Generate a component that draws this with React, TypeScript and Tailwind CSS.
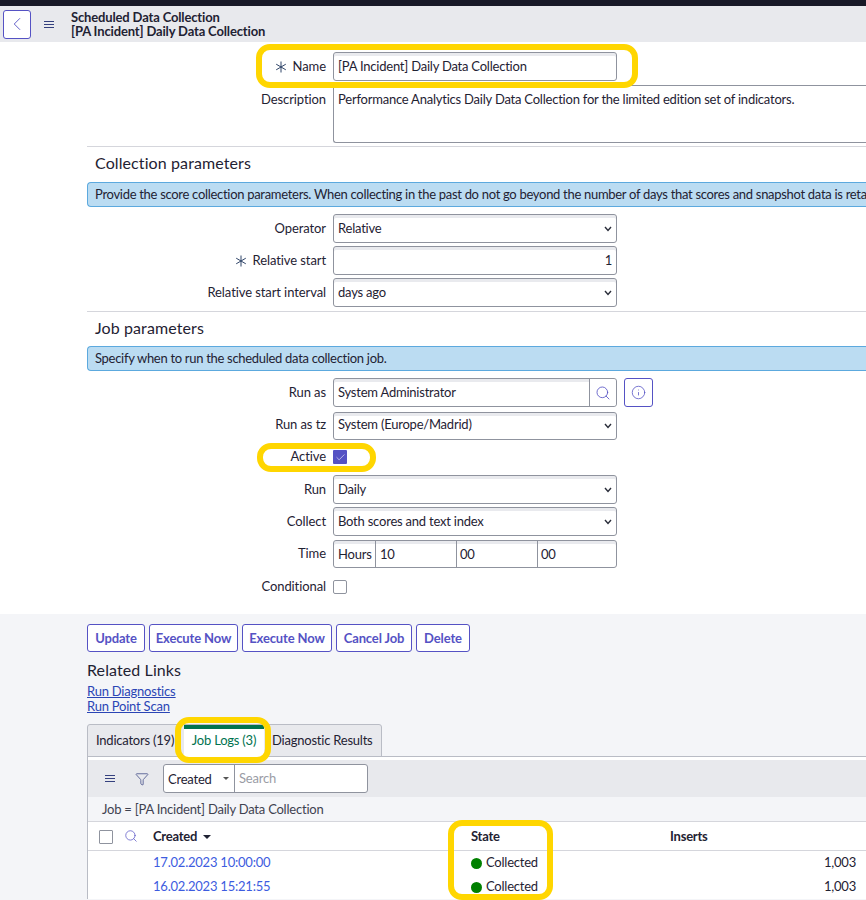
import React from "react";
import { Search, Info, Filter, Check, ChevronLeft } from "lucide-react";

const fieldClass =
  "h-full w-full rounded-[3px] border border-[#8f939e] bg-white px-1 text-[13px] text-[#1f2233] shadow-[inset_0_3px_0_#e9eaee] outline-none";

const Star = () => (
  <svg width="12" height="12" viewBox="0 0 12 12" className="mr-[6px] shrink-0" stroke="#2f4468" strokeWidth="1" fill="none">
    <path d="M6 0.5V11.5M1.2 3.2L10.8 8.8M1.2 8.8L10.8 3.2" />
  </svg>
);

const Bars = () => (
  <svg width="10" height="7" viewBox="0 0 10 7" className="shrink-0" stroke="#34407e" strokeWidth="1" fill="none">
    <path d="M0 0.5H10M0 3.5H10M0 6.5H10" />
  </svg>
);

const Row = ({ label, required, top, children }: { label: string; required?: boolean; top?: string; children: React.ReactNode }) => (
  <div className={`flex ${top ?? ""}`}>
    <div className="flex w-[326px] items-center justify-end text-[13px] tracking-[-0.09px] text-[#1f2233]">
      {required && <Star />}
      <span>{label}</span>
    </div>
    <div className="ml-[7px] w-[284px] tracking-[-0.22px]">{children}</div>
  </div>
);

const Sel = ({ value, short }: { value: string; short?: boolean }) => (
  <div className="relative h-full">
    <select defaultValue={value} className={`${fieldClass} appearance-none ${short ? "pb-[2px]" : ""}`}>
      <option>{value}</option>
    </select>
    <svg width="8" height="6" viewBox="0 0 8 6" className="pointer-events-none absolute right-[5px] top-[12px]" stroke="#2a2d3a" strokeWidth="1.4" fill="none">
      <path d="M1 1L4 4.5L7 1" />
    </svg>
  </div>
);

const SectionHead = ({ text, note, gap }: { text: string; note: string; gap: string }) => (
  <div className="ml-[87px]">
    <h2 className="pl-[8px] text-[16px] leading-[20px] tracking-[0.1px] text-[#1f2233]">{text}</h2>
    <div className={`${gap} h-[25px] w-[800px] overflow-hidden whitespace-nowrap rounded-l-[4px] border border-r-0 border-[#5ca9de] bg-[#bbdcf2] pl-[7px] text-[13px] leading-[22px] tracking-[-0.3px] text-[#1f2233]`}>
      {note}
    </div>
  </div>
);

const actions = [
  { label: "Update", w: "w-[58px]" },
  { label: "Execute Now", w: "w-[89px]" },
  { label: "Execute Now", w: "w-[90px]" },
  { label: "Cancel Job", w: "w-[76px]" },
  { label: "Delete", w: "w-[54px]" },
];

const App: React.FC = () => {
  return (
    <div className="relative h-[900px] w-[866px] overflow-hidden bg-white font-['Lato',sans-serif] tracking-[-0.22px] text-[#1f2233]">
      <div className="h-[6px] bg-[#181927]"></div>
      <header className="flex h-[36px] items-center bg-[#e8e9ed]">
        <button className="ml-[3px] flex h-[29px] w-[28px] items-center justify-center rounded-[3px] border border-[#5552c4] bg-white text-[#5552c4]">
          <ChevronLeft size={22} strokeWidth={1} />
        </button>
        <span className="ml-[13px]"><Bars /></span>
        <div className="ml-[17px] text-[13px] font-bold leading-[14px] tracking-[-0.15px] text-[#1f2233]">
          <div>Scheduled Data Collection</div>
          <div>[PA Incident] Daily Data Collection</div>
        </div>
      </header>

      <form className="h-[572px] pt-[10px]">
        <Row label="Name" required>
          <div className="h-[29px]">
            <input readOnly value="[PA Incident] Daily Data Collection" className={fieldClass + " pb-[2px]"} />
          </div>
        </Row>
        <div className="mt-[4px] flex">
          <div className="w-[326px] shrink-0 pt-[5px] text-right text-[13px] tracking-[-0.09px]">Description</div>
          <div className="ml-[7px] h-[58px] w-[560px] shrink-0 rounded-l-[3px] border border-r-0 border-[#8f939e] pl-[4px] pt-[4px] text-[13px] leading-[18px]">
            Performance Analytics Daily Data Collection for the limited edition set of indicators.
          </div>
        </div>
        <div className="ml-[87px] mt-[3px] h-px bg-[#d5d6dc]"></div>
        <div className="mt-[6px]">
          <SectionHead
            gap="mt-[9px]"
            text="Collection parameters"
            note="Provide the score collection parameters. When collecting in the past do not go beyond the number of days that scores and snapshot data is retained."
          />
        </div>
        <div className="mt-[7px] flex flex-col gap-[3px]">
          <Row label="Operator"><div className="h-[29px]"><Sel value="Relative" /></div></Row>
          <Row label="Relative start" required>
            <div className="h-[29px]"><input readOnly value="1" className={fieldClass + " pb-[1px] text-right"} /></div>
          </Row>
          <Row label="Relative start interval"><div className="h-[29px]"><Sel value="days ago" /></div></Row>
        </div>
        <div className="ml-[87px] mt-[4px] h-px bg-[#d5d6dc]"></div>
        <div className="mt-[6px]">
          <SectionHead gap="mt-[8px]" text="Job parameters" note="Specify when to run the scheduled data collection job." />
        </div>
        <div className="mt-[7px] flex flex-col">
          <div className="relative">
            <Row label="Run as">
              <div className="flex h-[29px] rounded-[3px] border border-[#8f939e] bg-white shadow-[inset_0_3px_0_#e9eaee]">
                <div className="flex-1 px-1 text-[13px] leading-[27px]">System Administrator</div>
                <div className="flex w-[27px] items-center justify-center rounded-r-[3px] border-l border-[#8f939e] bg-white text-[#5552c4]">
                  <Search size={16} strokeWidth={1.25} />
                </div>
              </div>
            </Row>
            <button type="button" className="absolute left-[624px] top-0 flex h-[29px] w-[29px] items-center justify-center rounded-[3px] border border-[#5552c4] bg-white text-[#5552c4]">
              <Info size={15} strokeWidth={1.25} />
            </button>
          </div>
          <Row label="Run as tz" top="mt-[4px]"><div className="h-[28px]"><Sel value="System (Europe/Madrid)" short /></div></Row>
          <Row label="Active" top="mt-[4px] mb-[4px] h-[28px]">
            <div className="flex h-full items-center">
              <span className="flex h-[14px] w-[14px] items-center justify-center rounded-[1px] bg-[#5552c4] text-white">
                <Check size={11} strokeWidth={1.25} />
              </span>
            </div>
          </Row>
          <Row label="Run"><div className="h-[29px]"><Sel value="Daily" /></div></Row>
          <Row label="Collect" top="mt-[3px]"><div className="h-[29px]"><Sel value="Both scores and text index" /></div></Row>
          <Row label="Time" top="mt-[4px]">
            <div className="flex h-[28px] rounded-[3px] border border-[#8f939e] bg-white text-[13px] leading-[27px] shadow-[inset_0_3px_0_#e9eaee]">
              <div className="w-[42px] border-r border-[#8f939e] pl-[4px]">Hours</div>
              <div className="w-[81px] border-r border-[#8f939e] pl-[4px]">10</div>
              <div className="w-[81px] border-r border-[#8f939e] pl-[3px]">00</div>
              <div className="flex-1 pl-[3px]">00</div>
            </div>
          </Row>
          <Row label="Conditional" top="mt-[4px] h-[30px]">
            <div className="flex h-full items-center">
              <span className="h-[14px] w-[14px] rounded-[2px] border border-[#8f939e] bg-white"></span>
            </div>
          </Row>
        </div>
      </form>

      <section className="h-[286px] bg-[#f4f5f8] pl-[87px] pt-[10px]">
        <div className="flex gap-[4px]">
          {actions.map((a, i) => (
            <button key={i} className={`${a.w} h-[28px] whitespace-nowrap rounded-[3px] border border-[#5552c4] bg-white pt-[1px] text-[13px] font-bold tracking-[-0.12px] text-[#5552c4]`}>
              {a.label}
            </button>
          ))}
        </div>
        <div className="mt-[8px] text-[16px] leading-[20px] tracking-[0.1px]">Related Links</div>
        <div className="mt-[4px] flex flex-col text-[13px] leading-[15px] text-[#2b45b5] underline">
          <a href="#">Run Diagnostics</a>
          <a href="#">Run Point Scan</a>
        </div>

        <div className="mt-[10px] flex h-[33px] w-[295px] rounded-t-[3px] border border-[#b9bcc5] bg-[#e8e9ed] text-[13px]">
          <div className="w-[96px] whitespace-nowrap pl-[8px] pt-[6px]">Indicators (19)</div>
          <div className="h-[32px] w-[80px] whitespace-nowrap border-t-4 border-[#00734f] bg-white pt-[2px] text-center text-[#00734f]">Job Logs (3)</div>
          <div className="whitespace-nowrap pl-[8px] pt-[6px]">Diagnostic Results</div>
        </div>
        <div className="border-l border-[#b9bcc5] bg-white">
          <div className="mt-[-1px] h-[4px] border-t border-[#b9bcc5]"></div>
          <div className="flex h-[37px] items-center bg-[#e8e9ed] pl-[17px]">
            <Bars />
            <Filter size={14} strokeWidth={1.25} className="ml-[20px] text-[#34407e]" />
            <div className="ml-[14px] flex h-[29px] w-[205px] rounded-[3px] border border-[#8f939e] bg-white text-[13px] leading-[26px]">
              <div className="flex w-[71px] items-center justify-between border-r border-[#8f939e] pl-[4px] pr-[5px]">
                <span>Created</span>
                <span className="h-0 w-0 border-x-[3px] border-t-[3px] border-x-transparent border-t-[#555]"></span>
              </div>
              <div className="pl-[4px] text-[#9a9ca5]">Search</div>
            </div>
          </div>
          <div className="h-[25px] border-b border-[#d5d6dc] bg-[#f4f5f8] pl-[14px] text-[13px] leading-[25px] text-[#3f4250]">
            Job = [PA Incident] Daily Data Collection
          </div>
          <div className="flex h-[29px] items-center border-b border-[#d5d6dc] pt-[2px] text-[13px] font-bold">
            <span className="ml-[11px] h-[14px] w-[14px] rounded-[1px] border border-[#8f939e]"></span>
            <Search size={14} strokeWidth={1.25} className="ml-[11px] mb-[3px] text-[#5552c4]" />
            <span className="ml-[15px] flex w-[318px] items-center">
              Created
              <span className="ml-[6px] h-0 w-0 border-x-[4px] border-t-[4px] border-x-transparent border-t-[#1f2233]"></span>
            </span>
            <span className="w-[199px]">State</span>
            <span>Inserts</span>
          </div>
          {["17.02.2023 10:00:00", "16.02.2023 15:21:55"].map((d) => (
            <div key={d} className="flex h-[24px] items-center pr-[10px] text-[13px]">
              <a href="#" className="ml-[65px] w-[318px] text-[#3d5ce0]">{d}</a>
              <span className="flex items-center">
                <span className="mr-[4px] h-[11px] w-[11px] rounded-full bg-[#008000]"></span>
                Collected
              </span>
              <span className="ml-auto whitespace-nowrap">1,003</span>
            </div>
          ))}
        </div>
      </section>

      {/* yellow callouts drawn on top of the screenshot */}
      <div className="absolute left-[256px] top-[44px] h-[44px] w-[382px] rounded-[14px] border-[6px] border-[#ffd600]"></div>
      <div className="absolute left-[257px] top-[443px] h-[29px] w-[119px] rounded-[14px] border-[6px] border-[#ffd600]"></div>
      <div className="absolute left-[175px] top-[717px] h-[46px] w-[96px] rounded-[14px] border-[6px] border-[#ffd600]"></div>
      <div className="absolute left-[448px] top-[820px] h-[80px] w-[105px] rounded-[14px] border-[6px] border-[#ffd600]"></div>
    </div>
  );
};

export default App;
